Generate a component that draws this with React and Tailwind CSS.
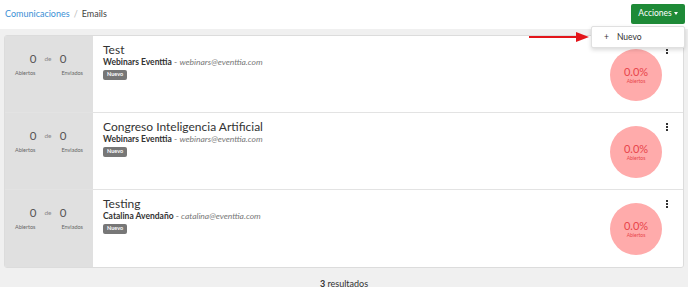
import React from 'react';

const emails = [
  { title: 'Test', sender: 'Webinars Eventtia', email: 'webinars@eventtia.com' },
  { title: 'Congreso Inteligencia Artificial', sender: 'Webinars Eventtia', email: 'webinars@eventtia.com' },
  { title: 'Testing', sender: 'Catalina Avendaño', email: 'catalina@eventtia.com' },
];

const EmailRow = ({ item, last }) => (
  <div className={`flex h-[77px] ${last ? '' : 'border-b border-[#e3e3e3]'}`}>
    <div className="w-[88px] shrink-0 bg-[#e0e0e0] flex flex-col items-center pt-[17px]">
      <div className="flex items-center text-[#555] ml-[-2px]">
        <span className="text-[11.5px] leading-none w-[14px] text-center">0</span>
        <span className="text-[6.5px] text-[#8a8a8a] w-[16px] text-center">de</span>
        <span className="text-[11.5px] leading-none w-[14px] text-center">0</span>
      </div>
      <div className="flex justify-between w-[68px] mt-[6px] text-[5.5px] text-[#666] leading-none">
        <span>Abiertos</span>
        <span>Enviados</span>
      </div>
    </div>
    <div className="flex-1 bg-white relative pl-[10px] pt-[7px]">
      <div className="text-[12px] leading-[14px] text-[#333]">{item.title}</div>
      <div className="text-[8.5px] leading-[11px] text-[#333]">
        <span className="font-bold">{item.sender}</span>
        <span className="text-[#888]"> - </span>
        <span className="italic text-[#777]">{item.email}</span>
      </div>
      <div className="w-fit mt-[2px] bg-[#777] text-white text-[5.5px] font-bold leading-none px-[4px] py-[2px] rounded-[2px]">
        Nuevo
      </div>
      <div className="absolute right-[15px] top-[10px] flex flex-col gap-[1px]">
        <span className="block w-[2px] h-[2px] bg-[#333]" />
        <span className="block w-[2px] h-[2px] bg-[#333]" />
        <span className="block w-[2px] h-[2px] bg-[#333]" />
      </div>
      <div className="absolute right-[21px] top-[13px] w-[52px] h-[52px] rounded-full bg-[#ffabab] flex flex-col items-center justify-center">
        <span className="text-[11px] leading-none text-[#e8444a]">0.0%</span>
        <span className="text-[5px] leading-none text-[#e8444a] mt-[2px]">Abiertos</span>
      </div>
    </div>
  </div>
);

export default function App() {
  return (
    <div className="w-[688px] h-[287px] overflow-hidden bg-[#f0f0f0] relative" style={{ fontFamily: 'Lato, "Open Sans", sans-serif' }}>
      <div className="h-[29px] bg-white flex items-center justify-between pl-[5px] pr-[3px]">
        <div className="text-[9px] pb-[2px]">
          <span className="text-[#3b8fd5]">Comunicaciones</span>
          <span className="text-[#bbb] mx-[4px]">/</span>
          <span className="text-[#444]">Emails</span>
        </div>
        <button className="h-[20px] w-[54px] bg-[#1e8a37] text-white text-[8.5px] rounded-[2px] flex items-center justify-center gap-[2px] mb-[2px]">
          Acciones
          <span className="inline-block w-0 h-0 border-l-[2.5px] border-r-[2.5px] border-t-[3px] border-l-transparent border-r-transparent border-t-white" />
        </button>
      </div>

      <div className="mx-[4px] mt-[6px] border border-[#dcdcdc] rounded-[3px] overflow-hidden">
        {emails.map((item, idx) => (
          <EmailRow key={idx} item={item} last={idx === emails.length - 1} />
        ))}
      </div>

      <div className="text-center text-[9px] leading-none text-[#333] mt-[11px]">
        <span className="font-bold">3</span> resultados
      </div>

      {/* dropdown menu */}
      <div className="absolute left-[591px] top-[26px] w-[94px] h-[22px] bg-white border border-[#e0e0e0] shadow-[0_2px_4px_rgba(0,0,0,0.15)] rounded-[2px] flex items-center pl-[12px] text-[8.5px] text-[#333]">
        <span className="mr-[8px]">+</span>Nuevo
      </div>

      {/* red arrow */}
      <svg className="absolute left-[528px] top-[31px]" width="62" height="12" viewBox="0 0 62 12">
        <line x1="1" y1="6" x2="50" y2="6" stroke="#e3151a" strokeWidth="2" />
        <polygon points="48,1 61,6 48,11" fill="#e3151a" />
      </svg>
    </div>
  );
}
